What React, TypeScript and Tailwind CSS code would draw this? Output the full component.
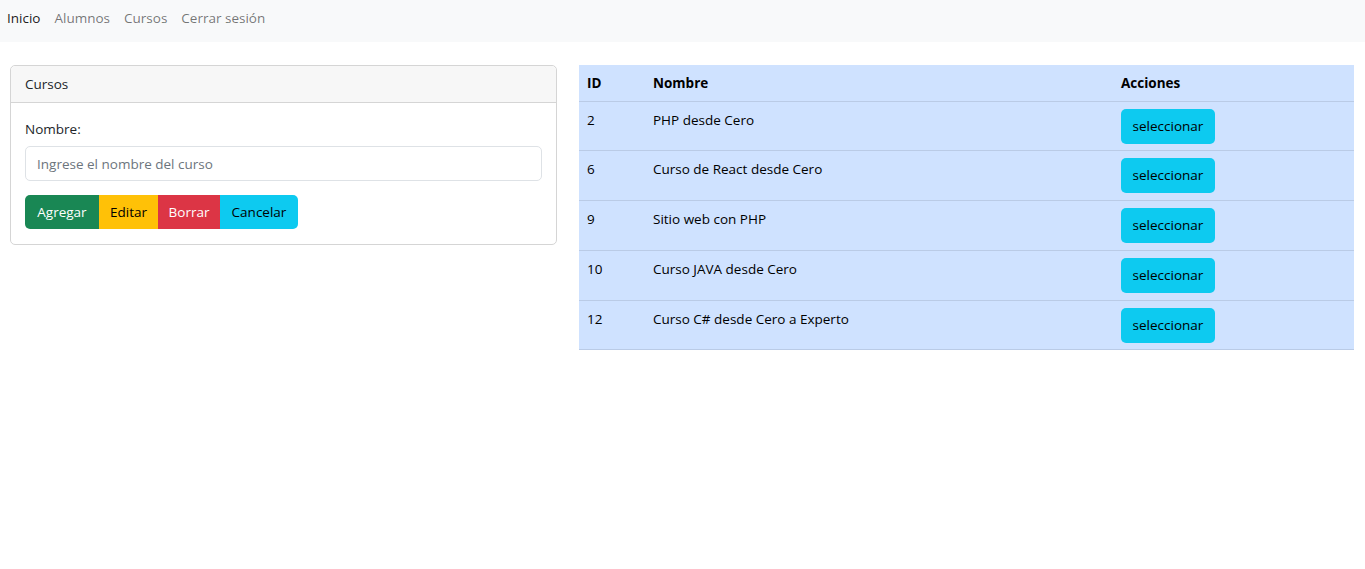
import { useState } from "react";

type Curso = { id: number; nombre: string };

const cursos: Curso[] = [
  { id: 2, nombre: "PHP desde Cero" },
  { id: 6, nombre: "Curso de React desde Cero" },
  { id: 9, nombre: "Sitio web con PHP" },
  { id: 10, nombre: "Curso JAVA desde Cero" },
  { id: 12, nombre: "Curso C# desde Cero a Experto" },
];

function Navbar() {
  return (
    <nav className="h-[42px] bg-[#f8f9fa] flex items-start pt-[8px]">
      <a href="#" className="px-[7px] text-[rgba(0,0,0,0.9)]">Inicio</a>
      <a href="#" className="px-[7px] text-[rgba(0,0,0,0.55)]">Alumnos</a>
      <a href="#" className="px-[7px] text-[rgba(0,0,0,0.55)]">Cursos</a>
      <a href="#" className="px-[7px] text-[rgba(0,0,0,0.55)]">Cerrar sesión</a>
    </nav>
  );
}

function CursoForm() {
  const [nombre, setNombre] = useState("");
  return (
    <div className="w-[547px] border border-[#d5d5d5] rounded-[5px] bg-white self-start">
      <div className="h-[37px] px-[14px] flex items-center bg-[#f7f7f7] border-b border-[#d5d5d5] rounded-t-[5px] text-[#212529]">
        Cursos
      </div>
      <div className="px-[14px] pt-[16px] pb-[15px]">
        <label className="block mb-[6px] text-[#212529]">Nombre:</label>
        <input
          value={nombre}
          onChange={(e) => setNombre(e.target.value)}
          placeholder="Ingrese el nombre del curso"
          className="w-full h-[35px] px-[11px] border border-[#dee2e6] rounded-[5px] placeholder:text-[#6c757d] outline-none"
        />
        <div className="flex mt-[14px] h-[34px]">
          <button className="w-[74px] bg-[#198754] text-white rounded-l-[5px]">Agregar</button>
          <button className="w-[59px] bg-[#ffc107] text-black">Editar</button>
          <button className="w-[62px] bg-[#dc3545] text-white">Borrar</button>
          <button className="w-[78px] bg-[#0dcaf0] text-black rounded-r-[5px]">Cancelar</button>
        </div>
      </div>
    </div>
  );
}

function CursosTable() {
  return (
    <table className="w-[775px] bg-[#cfe2ff] text-black border-collapse self-start">
      <thead>
        <tr className="h-[36px] border-b border-[#bacbe6]">
          <th className="w-[66px] text-left font-bold px-[8px] pt-[2px]">ID</th>
          <th className="w-[468px] text-left font-bold px-[8px] pt-[2px]">Nombre</th>
          <th className="text-left font-bold px-[8px] pt-[2px]">Acciones</th>
        </tr>
      </thead>
      <tbody>
        {cursos.map((c) => (
          <tr key={c.id} className="h-[49.8px] border-b border-[#bacbe6]">
            <td className="align-top px-[8px] pt-[8px]">{c.id}</td>
            <td className="align-top px-[8px] pt-[8px]">{c.nombre}</td>
            <td className="align-top px-[8px] pt-[7px]">
              <button className="w-[94px] h-[35px] bg-[#0dcaf0] rounded-[5px] text-black">seleccionar</button>
            </td>
          </tr>
        ))}
      </tbody>
    </table>
  );
}

export default function App() {
  return (
    <div className="min-h-screen bg-white text-[13.5px] leading-[21px] font-['Open_Sans',sans-serif]">
      <Navbar />
      <div className="flex pl-[10px] pt-[23px] gap-[22px]">
        <CursoForm />
        <CursosTable />
      </div>
    </div>
  );
}
